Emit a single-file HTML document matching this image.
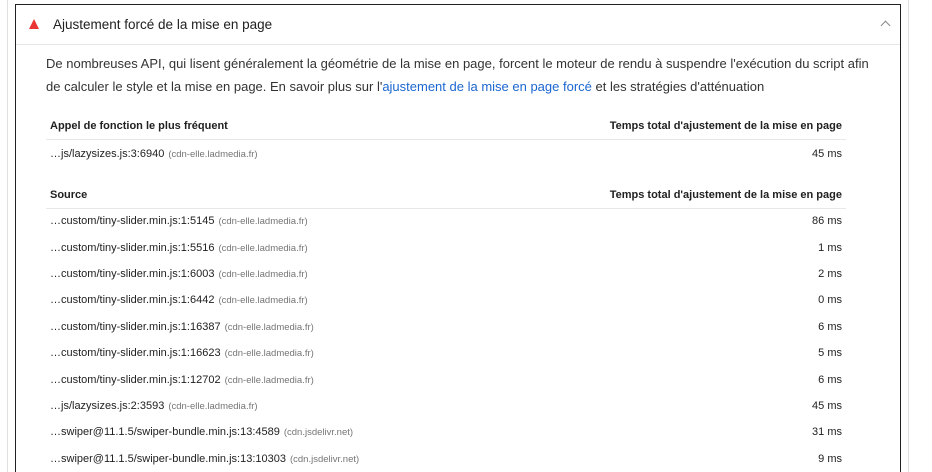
<!DOCTYPE html>
<html><head><meta charset="utf-8"><style>
*{margin:0;padding:0;box-sizing:border-box}
html,body{width:932px;height:472px;overflow:hidden}
body{background:#fff;font-family:"Liberation Sans",Arial,sans-serif;color:#212121;position:relative}
.gl{position:absolute;top:0;bottom:0;width:1px;background:#e0e0e0}
.card{position:absolute;left:15px;top:4px;width:886px;height:480px;border:1px solid #202124}
.hd{height:40px;border-bottom:1px solid #e6e6e6;position:relative}
.tri{position:absolute;left:13px;top:14px;width:0;height:0;border-left:5px solid transparent;border-right:5px solid transparent;border-bottom:10px solid #eb3434}
.ttl{position:absolute;left:37px;top:12px;font-size:13.5px;color:#212121}
.chev{position:absolute;left:866px;top:17px;width:7px;height:7px;border-left:1.3px solid #888;border-top:1.3px solid #888;transform:rotate(45deg)}
.desc{position:absolute;left:30px;top:47px;width:840px;font-size:13px;line-height:23px;color:#333}
.desc a{color:#1a66d0;text-decoration:none}
table{position:absolute;left:30px;width:800px;border-collapse:collapse;font-size:11px}
th{font-weight:bold;text-align:left;padding:0 4px;height:26px;border-bottom:1px solid #e8e8e8;color:#212121}
th.r,td.r{text-align:right}
td{padding:0 4px;height:26.4px;color:#212121}
td span{color:#757575;font-size:9.5px;margin-left:4px}
</style></head><body>
<div class="gl" style="left:7px"></div><div class="gl" style="left:908px"></div>
<div class="card">
<div class="hd"><div class="tri"></div><div class="ttl">Ajustement forcé de la mise en page</div><div class="chev"></div></div>
<div class="desc">De nombreuses API, qui lisent généralement la géométrie de la mise en page, forcent le moteur de rendu à suspendre l'exécution du script afin de calculer le style et la mise en page. En savoir plus sur l'<a>ajustement de la mise en page forcé</a> et les stratégies d'atténuation</div>
<table style="top:108px">
<tr><th>Appel de fonction le plus fréquent</th><th class="r">Temps total d'ajustement de la mise en page</th></tr>
<tr><td style="height:29px">…js/lazysizes.js:3:6940<span>(cdn-elle.ladmedia.fr)</span></td><td class="r">45 ms</td></tr>
</table>
<table style="top:177px">
<tr><th>Source</th><th class="r">Temps total d'ajustement de la mise en page</th></tr>
<tr><td>…custom/tiny-slider.min.js:1:5145<span>(cdn-elle.ladmedia.fr)</span></td><td class="r">86 ms</td></tr>
<tr><td>…custom/tiny-slider.min.js:1:5516<span>(cdn-elle.ladmedia.fr)</span></td><td class="r">1 ms</td></tr>
<tr><td>…custom/tiny-slider.min.js:1:6003<span>(cdn-elle.ladmedia.fr)</span></td><td class="r">2 ms</td></tr>
<tr><td>…custom/tiny-slider.min.js:1:6442<span>(cdn-elle.ladmedia.fr)</span></td><td class="r">0 ms</td></tr>
<tr><td>…custom/tiny-slider.min.js:1:16387<span>(cdn-elle.ladmedia.fr)</span></td><td class="r">6 ms</td></tr>
<tr><td>…custom/tiny-slider.min.js:1:16623<span>(cdn-elle.ladmedia.fr)</span></td><td class="r">5 ms</td></tr>
<tr><td>…custom/tiny-slider.min.js:1:12702<span>(cdn-elle.ladmedia.fr)</span></td><td class="r">6 ms</td></tr>
<tr><td>…js/lazysizes.js:2:3593<span>(cdn-elle.ladmedia.fr)</span></td><td class="r">45 ms</td></tr>
<tr><td>…swiper@11.1.5/swiper-bundle.min.js:13:4589<span>(cdn.jsdelivr.net)</span></td><td class="r">31 ms</td></tr>
<tr><td>…swiper@11.1.5/swiper-bundle.min.js:13:10303<span>(cdn.jsdelivr.net)</span></td><td class="r">9 ms</td></tr>
</table>
</div>
</body></html>
